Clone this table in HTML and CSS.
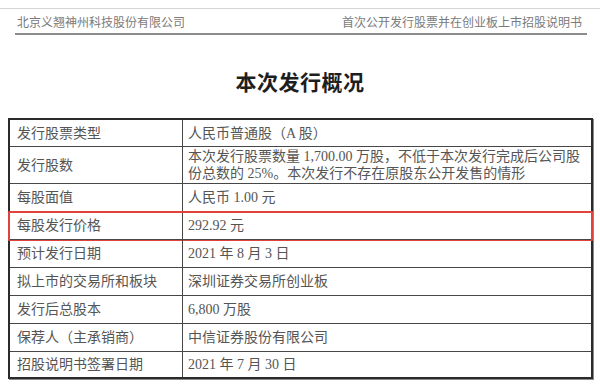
FILE: index.html
```html
<!DOCTYPE html>
<html lang="zh-CN">
<head>
<meta charset="utf-8">
<title>本次发行概况</title>
<link rel="stylesheet" href="styles.css">
</head>
<body>
<div class="page">
  <div class="topline"></div>
  <div class="header">
    <span class="company">北京义翘神州科技股份有限公司</span>
    <span class="doc">首次公开发行股票并在创业板上市招股说明书</span>
  </div>
  <h1 class="title">本次发行概况</h1>
  <div class="table">
    <div class="row first">
      <div class="cell key">发行股票类型</div>
      <div class="cell val">人民币普通股（A 股）</div>
    </div>
    <div class="row tall">
      <div class="cell key">发行股数</div>
      <div class="cell val">本次发行股票数量 1,700.00 万股，不低于本次发行完成后公司股<br>份总数的 25%。本次发行不存在原股东公开发售的情形</div>
    </div>
    <div class="row">
      <div class="cell key">每股面值</div>
      <div class="cell val">人民币 1.00 元</div>
    </div>
    <div class="row highlight">
      <div class="cell key">每股发行价格</div>
      <div class="cell val">292.92 元</div>
    </div>
    <div class="row">
      <div class="cell key">预计发行日期</div>
      <div class="cell val">2021 年 8 月 3 日</div>
    </div>
    <div class="row">
      <div class="cell key">拟上市的交易所和板块</div>
      <div class="cell val">深圳证券交易所创业板</div>
    </div>
    <div class="row">
      <div class="cell key">发行后总股本</div>
      <div class="cell val">6,800 万股</div>
    </div>
    <div class="row">
      <div class="cell key">保荐人（主承销商）</div>
      <div class="cell val">中信证券股份有限公司</div>
    </div>
    <div class="row last">
      <div class="cell key">招股说明书签署日期</div>
      <div class="cell val">2021 年 7 月 30 日</div>
    </div>
  </div>
</div>
</body>
</html>
```

FILE: styles.css
```css
* { box-sizing: border-box; }
html, body { margin: 0; padding: 0; background: #fff; }
body {
  width: 600px;
  height: 384px;
  overflow: hidden;
  font-family: "Liberation Serif", "Noto Sans CJK SC", serif;
}
.page { padding-top: 8px; }
.topline { height: 1px; background: #d4d4d4; }
.header {
  margin: 6px 13px 0 15px;
  padding: 0 5px 1px 2px;
  display: flex;
  justify-content: space-between;
  font-size: 12px;
  line-height: 17px;
  color: #7a7a7a;
  border-bottom: 2px solid #8c8c8c;
}
.title {
  margin: 31px 0 22px;
  text-align: center;
  font-family: "Noto Sans CJK SC", sans-serif;
  font-size: 21px;
  line-height: 30px;
  font-weight: 700;
  color: #1e1e1e;
  letter-spacing: 0.5px;
}
.table {
  margin: 0 7px 0 8px;
  border: 2px solid #2b2b2b;
  box-shadow: 1px 1px 0 #8a8a8a;
  font-size: 14px;
  color: #555;
}
.row {
  position: relative;
  display: grid;
  grid-template-columns: 173px 1fr;
  border-top: 1px solid #474747;
}
.row.first { border-top: 0; }
.cell {
  display: flex;
  align-items: center;
  min-height: 27px;
  line-height: 17px;
}
.row.first .cell { min-height: 26px; }
.row.tall .cell { min-height: 36px; }
.row.last .cell { min-height: 25px; }
.key {
  padding: 0 4px 0 7px;
  border-right: 1px solid #474747;
}
.val { padding: 0 4px 0 5px; }
.highlight::after {
  content: "";
  position: absolute;
  left: -2px;
  right: -2px;
  top: -1px;
  bottom: -2px;
  border: 2px solid #e2423c;
  border-radius: 1px;
  pointer-events: none;
}
```
